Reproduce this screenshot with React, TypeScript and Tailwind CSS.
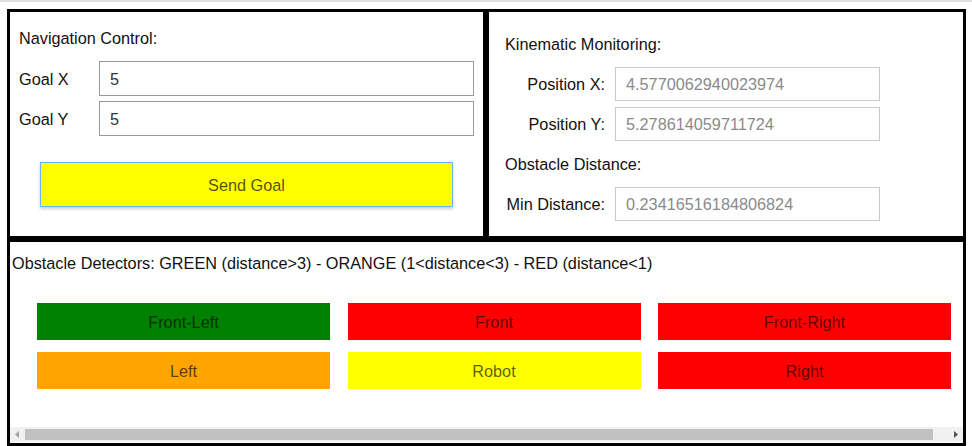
import React from 'react';

const detectors = [
    { name: 'Front-Left', color: 'bg-[#008000]' },
    { name: 'Front', color: 'bg-[#ff0000]' },
    { name: 'Front-Right', color: 'bg-[#ff0000]' },
    { name: 'Left', color: 'bg-[#ffa500]' },
    { name: 'Robot', color: 'bg-[#ffff00]' },
    { name: 'Right', color: 'bg-[#ff0000]' },
];

const Readout: React.FC<{ label: string; value: string; className?: string }> = ({ label, value, className }) => (
    <div className={`flex items-center ${className ?? ''}`}>
        <div className="w-[100px] text-right text-[#111]">{label}</div>
        <div className="ml-[10px] flex h-[34px] w-[265px] items-center border border-[#c8c8c8] pl-[10px] text-[#8a8a8a]">
            {value}
        </div>
    </div>
);

const GoalInput: React.FC<{ label: string; value: string; className?: string }> = ({ label, value, className }) => (
    <div className={`flex items-center ${className ?? ''}`}>
        <div className="w-[80px] text-[#111]">{label}</div>
        <div className="flex h-[35px] w-[375px] items-center border border-[#9a9a9a] pl-[10px] text-[#333]">{value}</div>
    </div>
);

const App: React.FC = () => {
    return (
        <div className="h-[446px] w-[972px] overflow-hidden bg-white text-[16.25px] leading-[18px] font-['Liberation_Sans',Arial,sans-serif]">
            <div className="h-[2px] bg-[#dedede]" />
            <div className="pl-[7px] pt-[7px]">
                <div className="flex h-[230px] w-[959px]">
                    {/* Navigation */}
                    <div className="w-[479px] border-[3px] border-black pl-[9px] pt-[17px]">
                        <div className="h-[18px] text-[#111]">Navigation Control:</div>
                        <GoalInput label="Goal X" value="5" className="mt-[14px]" />
                        <GoalInput label="Goal Y" value="5" className="mt-[5px]" />
                        <button className="ml-[21px] mt-[26px] flex h-[45px] w-[413px] items-center justify-center border border-[#6cb2f5] bg-[#ffff00] text-black/70 shadow-[0_2px_3px_rgba(0,0,0,0.2)]">
                            Send Goal
                        </button>
                    </div>
                    {/* Kinematics */}
                    <div className="w-[480px] border-[3px] border-black pl-[16px] pt-[23px]">
                        <div className="h-[18px] text-[#111]">Kinematic Monitoring:</div>
                        <Readout label="Position X:" value="4.5770062940023974" className="mt-[14px]" />
                        <Readout label="Position Y:" value="5.278614059711724" className="mt-[6px]" />
                        <div className="mt-[14px] h-[18px] text-[#111]">Obstacle Distance:</div>
                        <Readout label="Min Distance:" value="0.23416516184806824" className="mt-[14px]" />
                    </div>
                </div>
                {/* Detectors */}
                <div className="flex h-[207px] w-[959px] flex-col border-[3px] border-black">
                    <div className="pl-[2px] pt-[12px] text-[#111]">
                        Obstacle Detectors: GREEN (distance&gt;3) - ORANGE (1&lt;distance&lt;3) - RED (distance&lt;1)
                    </div>
                    <div className="mt-[31px] grid grid-cols-[293px_293px_293px] gap-x-[17.5px] gap-y-[12px] pl-[27px]">
                        {detectors.map((d) => (
                            <div key={d.name} className={`flex h-[37px] items-center justify-center text-black/65 ${d.color}`}>
                                {d.name}
                            </div>
                        ))}
                    </div>
                    <div className="flex-1" />
                    <div className="mb-[1px] flex h-[15px] items-center bg-[#f1f1f1]">
                        <div className="flex w-[15px] justify-center">
                            <svg width="5" height="7" viewBox="0 0 5 7">
                                <path d="M4 0 L0 3.5 L4 7 Z" fill="#a3a3a3" />
                            </svg>
                        </div>
                        <div className="h-[11px] w-[908px] bg-[#c1c1c1]" />
                        <div className="flex-1" />
                        <div className="flex w-[15px] justify-center">
                            <svg width="5" height="7" viewBox="0 0 5 7">
                                <path d="M1 0 L5 3.5 L1 7 Z" fill="#505050" />
                            </svg>
                        </div>
                    </div>
                </div>
            </div>
        </div>
    );
};

export default App;
